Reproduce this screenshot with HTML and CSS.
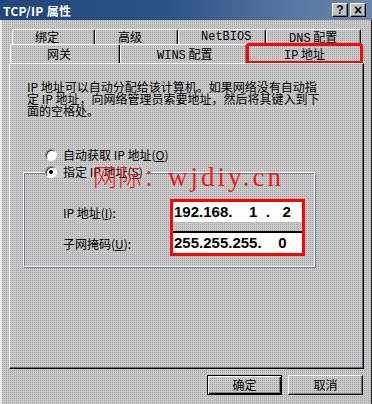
FILE: index.html
```html
<!DOCTYPE html>
<html lang="zh-CN">
<head>
<meta charset="utf-8">
<title>TCP/IP 属性</title>
<link rel="stylesheet" href="styles.css">
</head>
<body>
<div class="window">
  <div class="titlebar">
    <span class="title">TCP/IP 属性</span>
    <div class="tbtns">
      <span class="tbtn">?</span>
      <span class="tbtn close">&#215;</span>
    </div>
  </div>
  <div class="tabs">
    <div class="row row1">
      <div class="tab t1">绑定</div>
      <div class="tab t2">高级</div>
      <div class="tab t3 latin">NetBIOS</div>
      <div class="tab t4"><span class="latin">DNS</span> 配置</div>
    </div>
    <div class="row row2">
      <div class="tab t5">网关</div>
      <div class="tab t6"><span class="latin">WINS</span> 配置</div>
      <div class="tab t7 active"><span class="latin">IP</span> 地址</div>
    </div>
  </div>
  <div class="panel">
    <p class="intro">IP 地址可以自动分配给该计算机。如果网络没有自动指<br>定 IP 地址，向网络管理员索要地址，然后将其键入到下<br>面的空格处。</p>
    <div class="radio-row">
      <span class="radio"></span>
      <span>自动获取 IP 地址(<u>O</u>)</span>
    </div>
    <div class="group">
      <div class="legend">
        <span class="radio checked"></span>
        <span>指定 IP 地址(<u>S</u>)</span>
      </div>
      <div class="fields">
        <div class="labels">
          <div class="lbl l1">IP 地址(<u>I</u>):</div>
          <div class="lbl l2">子网掩码(<u>U</u>):</div>
        </div>
        <div class="redbox">
          <div class="field f1">192.168.&nbsp;&nbsp;&nbsp;&nbsp;1&nbsp;&nbsp;.&nbsp;&nbsp;&nbsp;2</div>
          <div class="gap"></div>
          <div class="field f2">255.255.255.&nbsp;&nbsp;&nbsp;&nbsp;0</div>
        </div>
      </div>
    </div>
    <div class="watermark"><span class="wm-cjk">网际：</span><span class="wm-lat">wjdiy.cn</span></div>
  </div>
  <div class="buttons">
    <div class="btn default">确定</div>
    <div class="btn">取消</div>
  </div>
</div>
</body>
</html>
```
FILE: styles.css
```css
html, body {
  margin: 0;
  padding: 0;
}
body {
  width: 372px;
  height: 404px;
  overflow: hidden;
  font-family: "Noto Sans CJK SC", "Liberation Sans", sans-serif;
  font-size: 12px;
  color: #000;
}
.window {
  width: 372px;
  height: 404px;
  box-sizing: border-box;
  background-color: #c9c9c9;
  background-image: conic-gradient(from 270deg at 1px 1px, #a4a4a4 90deg, transparent 0);
  background-size: 2px 2px;
  box-shadow: inset 2px 0 0 #e8e8e8, inset -1px 0 0 #222;
}
.latin {
  font-family: "Liberation Mono", monospace;
}
.titlebar {
  height: 20px;
  display: flex;
  align-items: center;
  justify-content: space-between;
  padding: 0 6px 0 3px;
  background: linear-gradient(90deg, #234679 0%, #2d5286 45%, #5a78a4 80%, #6d86ac 100%);
  color: #fff;
}
.title {
  font-weight: bold;
  font-size: 12px;
  letter-spacing: 0.3px;
}
.tbtns {
  display: flex;
  gap: 2px;
}
.tbtn {
  width: 16px;
  height: 14px;
  box-sizing: border-box;
  background: #c0c0c0;
  color: #000;
  font-family: "Liberation Sans", sans-serif;
  font-weight: bold;
  font-size: 12px;
  line-height: 12px;
  text-align: center;
  border-top: 1px solid #fff;
  border-left: 1px solid #fff;
  border-right: 1px solid #000;
  border-bottom: 1px solid #000;
  box-shadow: inset -1px -1px 0 #808080;
}
.tbtn.close {
  font-size: 14px;
}
.tabs {
  margin-top: 9px;
}
.row {
  display: flex;
}
.row1 {
  margin-left: 12px;
  height: 15px;
}
.row2 {
  margin-left: 10px;
  height: 19px;
}
.tab {
  box-sizing: border-box;
  border-top: 1px solid #fff;
  border-left: 1px solid #fff;
  border-right: 1px solid #000;
  box-shadow: inset -1px 0 0 #808080;
  border-radius: 2px 2px 0 0;
  line-height: 14px;
  white-space: nowrap;
}
.row1 .tab {
  padding-left: 22px;
  padding-top: 0;
}
.row2 .tab {
  padding-left: 36px;
  line-height: 17px;
}
.t1 { width: 83px; padding-left: 21px; }
.t2 { width: 83px; }
.t3 { width: 88px; }
.t4 { width: 95px; }
.t5 { width: 110px; }
.t6 { width: 127px; }
.t7 { width: 115px; }
.tab.active {
  outline: 3px solid #f00;
  outline-offset: -2px;
}
.panel {
  position: relative;
  width: 355px;
  height: 306px;
  margin-left: 9px;
  box-sizing: border-box;
  border-top: 1px solid #fff;
  border-left: 1px solid #fff;
  border-right: 1px solid #000;
  border-bottom: 1px solid #000;
  box-shadow: inset -1px -1px 0 #5a6a85;
  padding-top: 17px;
}
.intro {
  margin: 0 0 0 17px;
  line-height: 12px;
  font-size: 12px;
  white-space: nowrap;
}
.radio-row {
  display: flex;
  align-items: center;
  gap: 6px;
  margin: 32px 0 0 35px;
  height: 12px;
  line-height: 12px;
}
.radio {
  width: 12px;
  height: 12px;
  box-sizing: border-box;
  border-radius: 50%;
  background: #fff;
  border: 1px solid;
  border-color: #808080 #fff #fff #808080;
  box-shadow: inset 1px 1px 0 #404040;
  position: relative;
  flex: none;
}
.radio.checked::after {
  content: "";
  position: absolute;
  left: 3px;
  top: 3px;
  width: 4px;
  height: 4px;
  border-radius: 50%;
  background: #000;
}
.group {
  margin: 11px 0 0 13px;
  width: 292px;
  height: 95px;
  box-sizing: border-box;
  border: 1px solid #fff;
  box-shadow: inset 1px 1px 0 #6d7fa0, 1px 1px 0 #6d7fa0;
}
.legend {
  display: inline-flex;
  align-items: center;
  gap: 6px;
  margin: -7px 0 0 21px;
  height: 12px;
  line-height: 12px;
  padding-right: 2px;
  background-color: #c9c9c9;
  vertical-align: top;
}
.fields {
  display: flex;
  margin: 9px 0 0 39px;
}
.labels {
  width: 107px;
  display: flex;
  flex-direction: column;
}
.lbl {
  line-height: 12px;
}
.l1 { margin-top: 8px; }
.l2 { margin-top: 19px; }
.redbox {
  width: 135px;
  box-sizing: border-box;
  border: 3px solid #f00;
  display: flex;
  flex-direction: column;
}
.field {
  background: #fff;
  font-family: "Liberation Sans", sans-serif;
  font-weight: bold;
  font-size: 15px;
  padding-left: 1px;
  white-space: nowrap;
  box-sizing: border-box;
}
.f1 {
  height: 20px;
  line-height: 20px;
}
.gap {
  height: 9px;
  border-bottom: 2px solid #000;
}
.f2 {
  height: 20px;
  line-height: 20px;
}
.watermark {
  position: absolute;
  left: 83px;
  top: 97px;
  line-height: 30px;
  color: #f41a1a;
  white-space: nowrap;
  display: flex;
  align-items: baseline;
}
.wm-cjk {
  font-family: "Noto Sans CJK SC", sans-serif;
  font-size: 24px;
  font-weight: 300;
  letter-spacing: 1px;
}
.wm-lat {
  font-family: "Liberation Serif", serif;
  font-size: 27px;
  letter-spacing: 3px;
}
.buttons {
  display: flex;
  justify-content: flex-end;
  gap: 6px;
  margin: 6px 9px 0 0;
}
.btn {
  width: 75px;
  height: 20px;
  box-sizing: border-box;
  border-top: 1px solid #fff;
  border-left: 1px solid #fff;
  border-right: 1px solid #000;
  border-bottom: 1px solid #000;
  box-shadow: inset -1px -1px 0 #808080;
  text-align: center;
  line-height: 18px;
}
.btn.default {
  border: 1px solid #000;
  box-shadow: inset 1px 1px 0 #fff, inset -1px -1px 0 #000, inset -2px -2px 0 #808080;
}
```
